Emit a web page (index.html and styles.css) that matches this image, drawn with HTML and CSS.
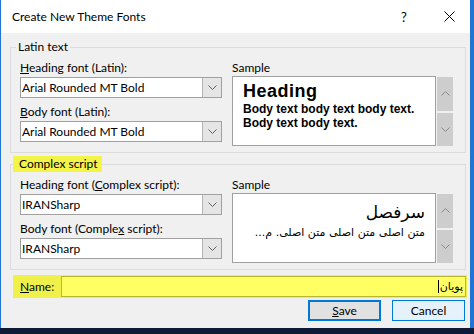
FILE: index.html
```html
<!DOCTYPE html>
<html lang="en">
<head>
  <meta charset="utf-8">
  <title>Create New Theme Fonts</title>
  <link rel="stylesheet" href="styles.css">
</head>
<body>
  <div class="window">
    <div class="titlebar">
      <span class="title">Create New Theme Fonts</span>
      <span class="help">?</span>
      <span class="close">
        <svg width="11" height="11" viewBox="0 0 11 11"><path d="M0.5 0.5 L10.5 10.5 M10.5 0.5 L0.5 10.5" stroke="#000" stroke-width="1" fill="none"/></svg>
      </span>
    </div>

    <div class="client">
      <fieldset class="group">
        <legend>Latin text</legend>
        <div class="cols">
          <div class="fields">
            <div class="label"><u>H</u>eading font (Latin):</div>
            <div class="combo">
              <span class="value">Arial Rounded MT Bold</span>
              <span class="drop"><svg width="9" height="5" viewBox="0 0 9 5"><path d="M0.5 0.5 L4.5 4.5 L8.5 0.5" stroke="#606060" fill="none"/></svg></span>
            </div>
            <div class="label gap"><u>B</u>ody font (Latin):</div>
            <div class="combo">
              <span class="value">Arial Rounded MT Bold</span>
              <span class="drop"><svg width="9" height="5" viewBox="0 0 9 5"><path d="M0.5 0.5 L4.5 4.5 L8.5 0.5" stroke="#606060" fill="none"/></svg></span>
            </div>
          </div>
          <div class="sample-col">
            <div class="label">Sample</div>
            <div class="sample-row">
              <div class="sample latin">
                <div class="s-head">Heading</div>
                <div class="s-body">Body text body text body text. Body text body text.</div>
              </div>
              <div class="scroll">
                <span class="sbtn"><svg width="9" height="5" viewBox="0 0 9 5"><path d="M0.5 4.5 L4.5 0.5 L8.5 4.5" stroke="#8a8a8a" fill="none"/></svg></span>
                <span class="sbtn"><svg width="9" height="5" viewBox="0 0 9 5"><path d="M0.5 0.5 L4.5 4.5 L8.5 0.5" stroke="#8a8a8a" fill="none"/></svg></span>
              </div>
            </div>
          </div>
        </div>
      </fieldset>

      <fieldset class="group">
        <legend class="marked">Complex script</legend>
        <div class="cols">
          <div class="fields">
            <div class="label">Heading font (<u>C</u>omplex script):</div>
            <div class="combo">
              <span class="value">IRANSharp</span>
              <span class="drop"><svg width="9" height="5" viewBox="0 0 9 5"><path d="M0.5 0.5 L4.5 4.5 L8.5 0.5" stroke="#606060" fill="none"/></svg></span>
            </div>
            <div class="label gap">Body font (Comple<u>x</u> script):</div>
            <div class="combo">
              <span class="value">IRANSharp</span>
              <span class="drop"><svg width="9" height="5" viewBox="0 0 9 5"><path d="M0.5 0.5 L4.5 4.5 L8.5 0.5" stroke="#606060" fill="none"/></svg></span>
            </div>
          </div>
          <div class="sample-col">
            <div class="label">Sample</div>
            <div class="sample-row">
              <div class="sample arabic" dir="rtl">
                <div class="a-head">سرفصل</div>
                <div class="a-body">متن اصلی متن اصلی متن اصلی. م...</div>
              </div>
              <div class="scroll">
                <span class="sbtn"><svg width="9" height="5" viewBox="0 0 9 5"><path d="M0.5 4.5 L4.5 0.5 L8.5 4.5" stroke="#8a8a8a" fill="none"/></svg></span>
                <span class="sbtn"><svg width="9" height="5" viewBox="0 0 9 5"><path d="M0.5 0.5 L4.5 4.5 L8.5 0.5" stroke="#8a8a8a" fill="none"/></svg></span>
              </div>
            </div>
          </div>
        </div>
      </fieldset>

      <div class="name-row">
        <span class="name-label"><u>N</u>ame:</span>
        <div class="name-input" dir="rtl"><span class="name-text">پویان</span><span class="caret"></span></div>
      </div>

      <div class="buttons">
        <span class="btn default"><u>S</u>ave</span>
        <span class="btn hover">Cancel</span>
      </div>
    </div>
  </div>
</body>
</html>
```

FILE: styles.css
```css
html, body {
  margin: 0;
  padding: 0;
}

body {
  width: 474px;
  height: 334px;
  overflow: hidden;
  background: #0d1b36;
  font-family: Lato, "Noto Sans", sans-serif;
  font-size: 12px;
  color: #000;
}

.window {
  width: 469px;
  height: 328px;
  border-left: 1px solid #1f74d4;
  border-right: 4px solid #1f74d4;
  background: #f0f0f0;
  display: flex;
  flex-direction: column;
}

/* title bar */
.titlebar {
  height: 33px;
  background: #fff;
  display: flex;
  align-items: center;
  flex: none;
}

.title {
  margin-left: 11px;
  flex: 1;
}

.help {
  width: 10px;
  margin-right: 33px;
  font-size: 13px;
}

.close {
  display: flex;
  margin-right: 15px;
}

/* client area */
.client {
  flex: 1;
  display: flex;
  flex-direction: column;
}

.group {
  margin: 6px 4px 0 9px;
  padding: 5px 11px 6px 9px;
  border: 1px solid #dcdcdc;
  min-width: 0;
}

.group + .group {
  margin-top: 3px;
}

legend {
  padding: 0 2px;
  margin-left: -4px;
  line-height: 16px;
}

legend.marked {
  background: #f3f348;
  margin-left: -7px;
  padding: 0 4px 0 6px;
}

.cols {
  display: flex;
  gap: 10px;
}

.fields {
  width: 202px;
  display: flex;
  flex-direction: column;
}

.label {
  line-height: 16px;
  margin-bottom: 1px;
}

.label.gap {
  margin-top: 6px;
}

.combo {
  height: 19px;
  border: 1px solid #a0a0a0;
  background: #fff;
  display: flex;
  align-items: center;
}

.combo .value {
  flex: 1;
  padding-left: 1px;
}

.drop {
  width: 18px;
  height: 19px;
  border-left: 1px solid #b4b4b4;
  background: #e5e5e5;
  display: flex;
  align-items: center;
  justify-content: center;
}

.sample-col {
  flex: 1;
  display: flex;
  flex-direction: column;
}

.sample-col .label {
  margin-bottom: 0;
}

.sample-row {
  display: flex;
  gap: 1px;
  height: 70px;
}

.sample {
  width: 204px;
  border: 1px solid #a0a0a0;
  background: #fff;
  overflow: hidden;
  box-sizing: border-box;
}

.latin {
  padding: 4px 0 0 10px;
  font-family: "Liberation Sans", Arial, sans-serif;
  font-weight: bold;
}

.s-head {
  font-size: 18px;
  line-height: 20px;
  letter-spacing: 0.5px;
}

.s-body {
  font-size: 12px;
  line-height: 14px;
  width: 180px;
  margin-top: 1px;
}

.arabic {
  padding: 5px 10px 0 0;
  font-family: "DejaVu Sans", sans-serif;
  white-space: nowrap;
}

.a-head {
  font-size: 17px;
  line-height: 26px;
}

.a-body {
  font-size: 11px;
  line-height: 16px;
}

.scroll {
  width: 16px;
  margin-top: 1px;
  display: flex;
  flex-direction: column;
  gap: 2px;
}

.sbtn {
  flex: 1;
  background: #cdcdcd;
  display: flex;
  align-items: center;
  justify-content: center;
}

/* name row */
.name-row {
  margin: 5px 3px 0 12px;
  height: 23px;
  background: #f0f04a;
  display: flex;
  align-items: center;
}

.name-label {
  width: 41px;
  padding-left: 7px;
  flex: none;
}

.name-input {
  flex: 1;
  height: 19px;
  margin-right: 1px;
  border: 1px solid #b8b830;
  background: #ffff64;
  display: flex;
  align-items: center;
  padding-right: 2px;
  font-family: "DejaVu Sans", sans-serif;
  font-size: 11px;
}

.caret {
  width: 1px;
  height: 13px;
  background: #000;
  margin-right: 1px;
}

/* buttons */
.buttons {
  margin-top: 2px;
  padding-right: 5px;
  display: flex;
  justify-content: flex-end;
  gap: 11px;
}

.btn {
  width: 73px;
  height: 21px;
  box-sizing: border-box;
  display: flex;
  align-items: center;
  justify-content: center;
}

.btn.default {
  background: #e1e1e1;
  border: 2px solid #0078d7;
}

.btn.hover {
  background: #e5f1fb;
  border: 1px solid #0078d7;
}
```
